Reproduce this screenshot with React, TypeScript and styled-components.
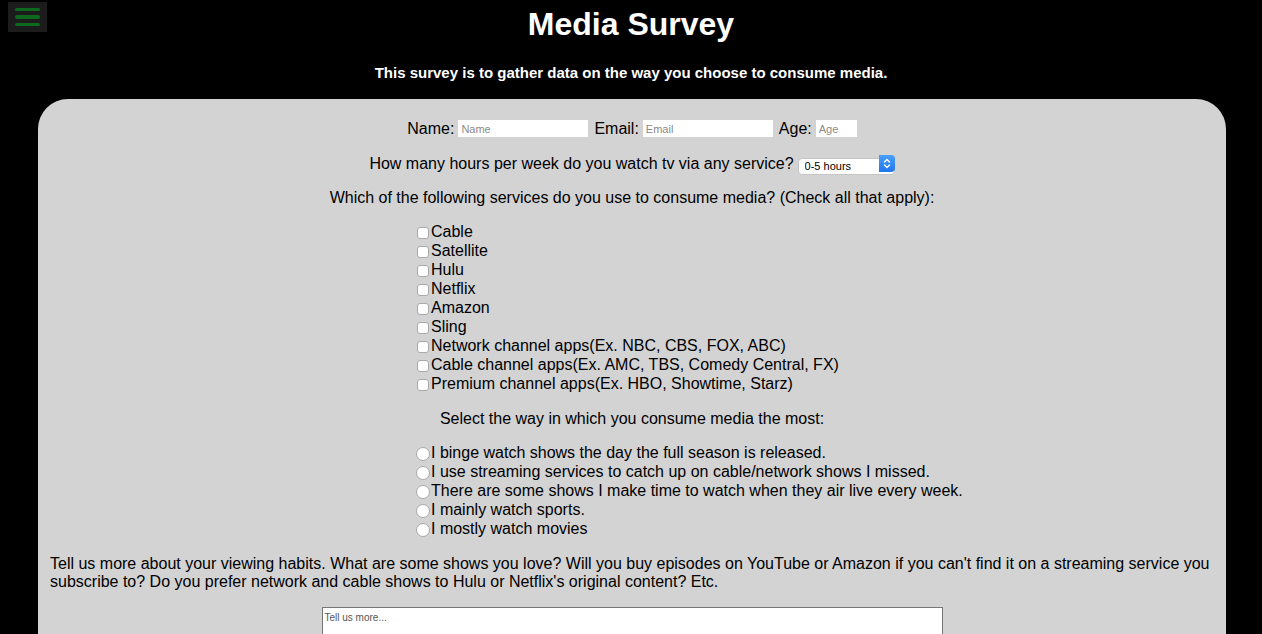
import React from 'react';
import styled, { createGlobalStyle } from 'styled-components';

const GlobalStyle = createGlobalStyle`
  body {
    margin: 0;
    background: #000;
    font-family: "Liberation Sans", Arial, Helvetica, sans-serif;
    color: #000;
  }
`;

const MenuToggle = styled.button`
  position: fixed;
  top: 2px;
  left: 8px;
  width: 39px;
  height: 30px;
  padding: 0;
  border: none;
  background: #1c1c1c;
  display: flex;
  flex-direction: column;
  align-items: center;
  justify-content: center;
  gap: 4px;
  cursor: pointer;
`;

const MenuBar = styled.span`
  display: block;
  width: 25px;
  height: 3.5px;
  border-radius: 2px;
  background: #0b6a1e;
`;

const Header = styled.header`
  text-align: center;
  color: #fff;
`;

const Title = styled.h1`
  margin: 0;
  padding-top: 6px;
  font-size: 32px;
  line-height: 37px;
  font-weight: bold;
`;

const Subtitle = styled.p`
  margin: 20px 0 0;
  font-size: 15px;
  line-height: 19px;
  font-weight: bold;
`;

const Panel = styled.form`
  margin: 17px 36px 0 38px;
  padding: 20px 12px 40px;
  background: #d3d3d3;
  border-radius: 30px 30px 0 0;
  font-size: 16px;
  line-height: 19px;
`;

const Row = styled.div<{ $gap?: number; $shift?: number }>`
  display: flex;
  justify-content: center;
  align-items: center;
  margin-top: ${(p) => p.$gap ?? 0}px;
  padding-left: ${(p) => p.$shift ?? 0}px;
  white-space: pre;
`;

const Label = styled.label`
  margin: 0 4px 0 0;
`;

const TextInput = styled.input<{ $w: number }>`
  width: ${(p) => p.$w}px;
  height: 17px;
  box-sizing: border-box;
  margin-right: 6px;
  padding: 1px 3px;
  border: none;
  background: #fff;
  font-family: "Liberation Sans", Arial, sans-serif;
  font-size: 11px;
  outline: none;
  &::placeholder {
    color: #8a8a8a;
  }
`;

const SelectWrap = styled.span`
  position: relative;
  display: inline-block;
  margin-left: 4px;
  width: 97px;
  height: 17px;
`;

const Select = styled.select`
  appearance: none;
  width: 100%;
  height: 100%;
  box-sizing: border-box;
  padding: 0 0 0 6px;
  border: 1px solid #c5c5c5;
  border-radius: 4px;
  background: #fff;
  font-family: "Liberation Sans", Arial, sans-serif;
  font-size: 11px;
  color: #000;
`;

const SelectArrows = styled.span`
  position: absolute;
  top: 0;
  right: 0;
  width: 16px;
  height: 17px;
  border-radius: 0 4px 4px 0;
  background: linear-gradient(#4aa0f8, #1f76ee);
  display: flex;
  align-items: center;
  justify-content: center;
  pointer-events: none;
`;

const Question = styled.p<{ $gap: number }>`
  margin: ${(p) => p.$gap}px 0 0;
  text-align: center;
`;

const OptionList = styled.div<{ $gap: number }>`
  margin: ${(p) => p.$gap}px 0 0 366px;
  display: flex;
  flex-direction: column;
`;

const Option = styled.label`
  display: flex;
  align-items: center;
  height: 19px;
  white-space: nowrap;
`;

const CheckBox = styled.input.attrs({ type: 'checkbox' })`
  appearance: none;
  width: 12px;
  height: 12px;
  margin: 2px 2px 0 1px;
  border: 1px solid #a9a9a9;
  border-radius: 3px;
  background: #fff;
  box-sizing: border-box;
`;

const Radio = styled.input.attrs({ type: 'radio' })`
  appearance: none;
  width: 14px;
  height: 14px;
  margin: 2px 1px 0 0;
  border: 1px solid #a9a9a9;
  border-radius: 50%;
  background: #fff;
  box-sizing: border-box;
`;

const Paragraph = styled.p`
  margin: 17px 0 0;
  line-height: 18px;
`;

const TextArea = styled.textarea`
  display: block;
  width: 621px;
  height: 100px;
  box-sizing: border-box;
  margin: 16px auto 0;
  padding: 4px 2px;
  border: 1px solid #767676;
  background: #fff;
  font-family: "Liberation Sans", Arial, sans-serif;
  font-size: 10px;
  resize: none;
  &::placeholder {
    color: #555;
  }
`;

const services = [
  'Cable',
  'Satellite',
  'Hulu',
  'Netflix',
  'Amazon',
  'Sling',
  'Network channel apps(Ex. NBC, CBS, FOX, ABC)',
  'Cable channel apps(Ex. AMC, TBS, Comedy Central, FX)',
  'Premium channel apps(Ex. HBO, Showtime, Starz)',
];

const habits = [
  'I binge watch shows the day the full season is released.',
  'I use streaming services to catch up on cable/network shows I missed.',
  'There are some shows I make time to watch when they air live every week.',
  'I mainly watch sports.',
  'I mostly watch movies',
];

const App: React.FC = () => {
  return (
    <>
      <GlobalStyle />
      <MenuToggle type="button" aria-label="Menu">
        <MenuBar />
        <MenuBar />
        <MenuBar />
      </MenuToggle>

      <Header>
        <Title>Media Survey</Title>
        <Subtitle>This survey is to gather data on the way you choose to consume media.</Subtitle>
      </Header>

      <Panel onSubmit={(e) => e.preventDefault()}>
        <Row $shift={6}>
          <Label htmlFor="name">Name:</Label>
          <TextInput id="name" $w={130} placeholder="Name" />
          <Label htmlFor="email">Email:</Label>
          <TextInput id="email" $w={130} placeholder="Email" />
          <Label htmlFor="age">Age:</Label>
          <TextInput id="age" $w={41} placeholder="Age" />
        </Row>

        <Row $gap={16}>
          How many hours per week do you watch tv via any service?
          <SelectWrap>
            <Select defaultValue="0-5">
              <option value="0-5">0-5 hours</option>
              <option value="6-10">6-10 hours</option>
              <option value="11-20">11-20 hours</option>
              <option value="20+">20+ hours</option>
            </Select>
            <SelectArrows>
              <svg width="8" height="11" viewBox="0 0 8 11" fill="none" stroke="#fff" strokeWidth="1.4" strokeLinecap="round" strokeLinejoin="round">
                <path d="M1.5 4 L4 1.5 L6.5 4" />
                <path d="M1.5 7 L4 9.5 L6.5 7" />
              </svg>
            </SelectArrows>
          </SelectWrap>
        </Row>

        <Question $gap={15}>
          Which of the following services do you use to consume media? (Check all that apply):
        </Question>

        <OptionList $gap={15}>
          {services.map((s) => (
            <Option key={s}>
              <CheckBox name="services" value={s} />
              {s}
            </Option>
          ))}
        </OptionList>

        <Question $gap={16}>Select the way in which you consume media the most:</Question>

        <OptionList $gap={15}>
          {habits.map((h) => (
            <Option key={h}>
              <Radio name="habit" value={h} />
              {h}
            </Option>
          ))}
        </OptionList>

        <Paragraph>
          Tell us more about your viewing habits. What are some shows you love? Will you buy episodes on YouTube or
          Amazon if you can't find it on a streaming service you subscribe to? Do you prefer network and cable shows to
          Hulu or Netflix's original content? Etc.
        </Paragraph>

        <TextArea placeholder="Tell us more..." />
      </Panel>
    </>
  );
};

export default App;
